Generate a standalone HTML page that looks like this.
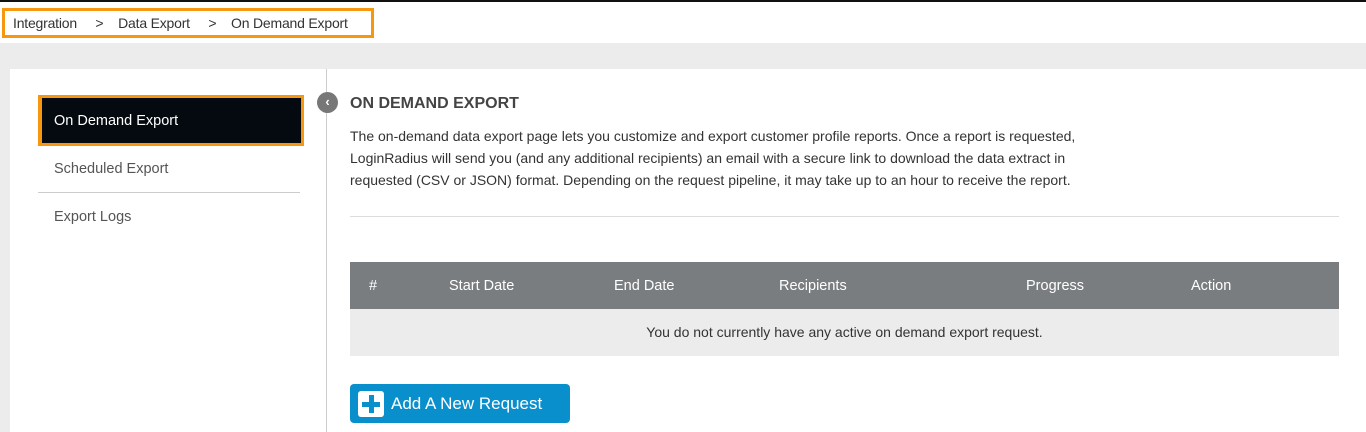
<!DOCTYPE html>
<html><head><style>
*{margin:0;padding:0;box-sizing:border-box}
body{width:1366px;height:432px;overflow:hidden;background:#ececed;font-family:"Liberation Sans",sans-serif;position:relative;color:#333}
.top{position:absolute;left:0;top:0;width:1366px;height:2px;background:#111}
.bc{position:absolute;left:0;top:2px;width:1366px;height:41px;background:#fff}
.bcb{position:absolute;left:2px;top:8px;width:372px;height:30px;border:3px solid #f7960f;font-size:14px;color:#333;padding:4px 0 0 8px;white-space:nowrap;letter-spacing:-0.2px}
.card{position:absolute;left:10px;top:69px;width:1356px;height:363px;background:#fff}
.side{position:absolute;left:10px;top:69px;width:317px;height:363px;background:#fff;border-right:1px solid #ccc}
.act{position:absolute;left:38px;top:95px;width:266px;height:51px;background:#050a10;border:3px solid #f7960f;border-left:4px solid #f7960f;color:#fff;font-size:14.5px;padding:15px 0 0 12px}
.si{position:absolute;left:54px;font-size:14.5px;color:#555}
.circ{position:absolute;left:317px;top:92px;width:21px;height:21px;border-radius:50%;background:#777;color:#fff;font-size:13px;text-align:center;line-height:20px;font-weight:bold}
h1{position:absolute;left:350px;top:95px;font-size:16px;font-weight:bold;color:#444}
.p{position:absolute;left:350px;top:125px;width:770px;font-size:14px;line-height:22px;color:#333}
.hr{position:absolute;left:350px;top:216px;width:989px;height:1px;background:#ddd}
.th{position:absolute;left:350px;top:262px;width:989px;height:47px;background:#7a7d80;color:#fff;font-size:14.5px}
.th span{position:absolute;top:16px}
.tr{position:absolute;left:350px;top:309px;width:989px;height:47px;background:#ececed;font-size:14px;text-align:center;line-height:47px;color:#333}
.btn{position:absolute;left:350px;top:384px;width:220px;height:39px;background:#0a8fcd;border-radius:4px;color:#fff;font-size:17px}
.pl{position:absolute;left:8px;top:7px;width:26px;height:26px;background:#fff;border-radius:3px}
.pl:before{content:"";position:absolute;left:11px;top:4px;width:5px;height:18px;background:#0a8fcd}
.pl:after{content:"";position:absolute;left:4px;top:11px;width:18px;height:5px;background:#0a8fcd}
</style></head><body>
<div class="top"></div>
<div class="bc"></div>
<div class="bcb">Integration&nbsp;&nbsp;&nbsp;&nbsp;&nbsp;&gt;&nbsp;&nbsp;&nbsp;&nbsp;Data Export&nbsp;&nbsp;&nbsp;&nbsp;&nbsp;&gt;&nbsp;&nbsp;&nbsp;&nbsp;On Demand Export</div>
<div class="card"></div>
<div class="side"></div>
<div class="act">On Demand Export</div>
<div class="si" style="top:161px">Scheduled Export</div>
<div style="position:absolute;left:38px;top:192px;width:262px;height:1px;background:#ccc"></div>
<div class="si" style="top:209px">Export Logs</div>
<div class="circ">&lsaquo;</div>
<h1>ON DEMAND EXPORT</h1>
<div class="p">The on-demand data export page lets you customize and export customer profile reports. Once a report is requested, LoginRadius will send you (and any additional recipients) an email with a secure link to download the data extract in requested (CSV or JSON) format. Depending on the request pipeline, it may take up to an hour to receive the report.</div>
<div class="hr"></div>
<div class="th"><span style="left:19px">#</span><span style="left:99px">Start Date</span><span style="left:264px">End Date</span><span style="left:429px">Recipients</span><span style="left:676px">Progress</span><span style="left:841px">Action</span></div>
<div class="tr">You do not currently have any active on demand export request.</div>
<div class="btn"><div class="pl"></div><span style="position:absolute;left:41px;top:10px">Add A New Request</span></div>
</body></html>
